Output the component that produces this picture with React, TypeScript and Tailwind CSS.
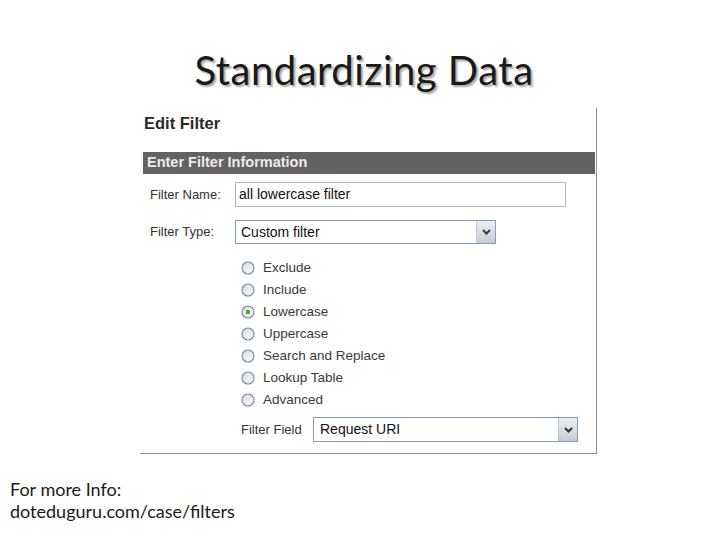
import React from 'react';

const Radio = ({ checked }: { checked?: boolean }) => (
  <svg width="14" height="14" viewBox="0 0 14 14" className="shrink-0">
    <defs>
      <linearGradient id="rg" x1="0" y1="0" x2="1" y2="1">
        <stop offset="0" stopColor="#d6d9de" />
        <stop offset="1" stopColor="#ffffff" />
      </linearGradient>
    </defs>
    <circle cx="7" cy="7" r="6" fill="url(#rg)" stroke="#7489a6" strokeWidth="1.1" />
    {checked && <circle cx="7" cy="7" r="2.3" fill="#3fae3f" />}
  </svg>
);

const Arrow = ({ h }: { h: number }) => (
  <div
    className="flex items-center justify-center w-[19px] border-l border-[#b8c4d2] bg-gradient-to-b from-[#eeeff1] to-[#c6ccd5]"
    style={{ height: h }}
  >
    <svg width="9" height="6" viewBox="0 0 9 6">
      <path d="M1 1 L4.5 4.5 L8 1" fill="none" stroke="#333" strokeWidth="2" />
    </svg>
  </div>
);

const options = ['Exclude', 'Include', 'Lowercase', 'Uppercase', 'Search and Replace', 'Lookup Table', 'Advanced'];

export default function App() {
  return (
    <div className="w-[728px] h-[546px] bg-white flex flex-col overflow-hidden">
      {/* title */}
      <h1 className="mt-[42px] h-[62px] text-center text-[40px] leading-[56px] tracking-[0.5px] text-[#1a1a1a] font-['Lato',sans-serif] [text-shadow:2px_2px_2px_rgba(0,0,0,0.35)]">
        Standardizing Data
      </h1>

      {/* screenshot panel */}
      <div className="ml-[140px] mt-[4px] w-[457px] h-[346px] border-r border-b border-[#8c8c8c] font-['Liberation_Sans',Arial,sans-serif] text-[#333]">
        <div className="ml-[4px] mt-[6px] text-[16.5px] leading-[18px] font-bold text-[#2a2a2a]">Edit Filter</div>

        <div className="ml-[3px] mt-[20px] w-[452px] h-[22px] bg-[#626262] flex items-center pl-[4px] text-[14.5px] font-bold text-[#ececec]">
          Enter Filter Information
        </div>

        <div className="flex items-center mt-[8px] h-[25px]">
          <div className="w-[95px] pl-[10px] text-[13px]">Filter Name:</div>
          <div className="w-[331px] h-[25px] border border-[#b0b6bf] flex items-center pl-[3px] text-[14px] text-[#111]">
            all lowercase filter
          </div>
        </div>

        <div className="flex items-center mt-[13px] h-[24px]">
          <div className="w-[95px] pl-[10px] text-[13px]">Filter Type:</div>
          <div className="w-[261px] h-[24px] border border-[#7f9db9] flex items-center justify-between text-[14px] text-[#111]">
            <span className="pl-[5px]">Custom filter</span>
            <Arrow h={22} />
          </div>
        </div>

        <div className="mt-[13px] ml-[101px] flex flex-col">
          {options.map((o) => (
            <div key={o} className="h-[22px] flex items-center gap-[8px] text-[13.5px] text-[#3a3a3a]">
              <Radio checked={o === 'Lowercase'} />
              <span>{o}</span>
            </div>
          ))}
        </div>

        <div className="flex items-center mt-[6px] ml-[101px] h-[25px]">
          <div className="w-[72px] text-[13px]">Filter Field</div>
          <div className="w-[265px] h-[25px] border border-[#7f9db9] flex items-center justify-between text-[14px] text-[#111]">
            <span className="pl-[6px]">Request URI</span>
            <Arrow h={23} />
          </div>
        </div>
      </div>

      {/* footer */}
      <div className="mt-[24px] ml-[10px] text-[18px] leading-[22px] text-[#1a1a1a] font-['Lato',sans-serif]">
        <div>For more Info:</div>
        <div>doteduguru.com/case/filters</div>
      </div>
    </div>
  );
}
